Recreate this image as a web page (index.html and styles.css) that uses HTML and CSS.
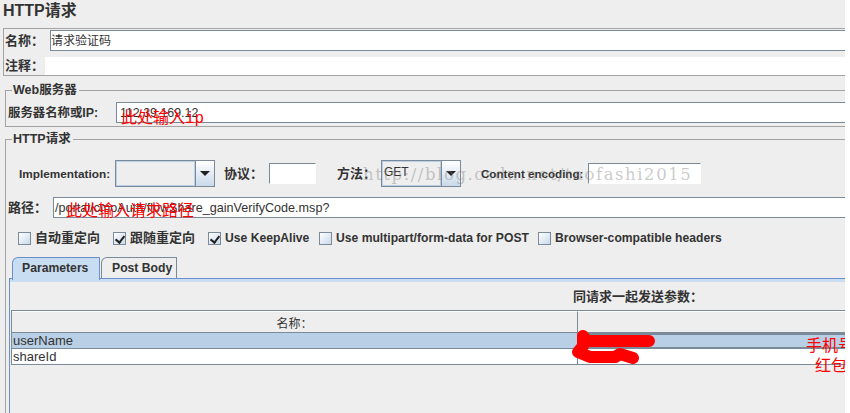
FILE: index.html
```html
<!DOCTYPE html>
<html lang="zh">
<head>
<meta charset="utf-8">
<title>HTTP请求</title>
<link rel="stylesheet" href="styles.css">
</head>
<body>
<div class="app">
  <div class="title">HTTP请求</div>
  <div class="namebox">
    <div class="row-name"><span class="lbl">名称：</span><div class="field field-name">请求验证码</div></div>
    <div class="row-note"><span class="lbl">注释：</span><div class="note"></div></div>
  </div>
  <div class="group group-web">
    <div class="legend">Web服务器</div>
    <div class="row-server"><span class="lbl">服务器名称或IP:</span><div class="field field-server">112.39.169.12</div></div>
  </div>
  <div class="group group-http">
    <div class="legend">HTTP请求</div>
    <div class="row-impl">
      <span class="lbl lbl-impl">Implementation:</span>
      <div class="combo combo-impl"><div class="combo-val"></div><div class="combo-btn"><i class="arrow"></i></div></div>
      <span class="lbl lbl-proto">协议：</span>
      <div class="field small small-proto"></div>
      <span class="lbl lbl-method">方法：</span>
      <div class="combo combo-method"><div class="combo-val">GET</div><div class="combo-btn"><i class="arrow"></i></div></div>
      <span class="lbl lbl-enc">Content encoding:</span>
      <div class="field small small-enc"></div>
    </div>
    <div class="row-path"><span class="lbl">路径：</span><div class="field field-path">/portal/cmoAuth/flowShare_gainVerifyCode.msp?</div></div>
    <div class="row-checks">
      <label class="chk chk-1"><i class="box"></i>自动重定向</label>
      <label class="chk chk-2"><i class="box on"></i>跟随重定向</label>
      <label class="chk chk-3"><i class="box on"></i>Use KeepAlive</label>
      <label class="chk chk-4"><i class="box"></i>Use multipart/form-data for POST</label>
      <label class="chk"><i class="box"></i>Browser-compatible headers</label>
    </div>
    <div class="tabs">
      <div class="tab tab-active">Parameters</div>
      <div class="tab">Post Body</div>
    </div>
    <div class="panel">
      <div class="panel-title">同请求一起发送参数：</div>
      <div class="table">
        <div class="cell head">名称：</div><div class="cell head head-r"></div>
        <div class="cell sel">userName</div><div class="cell sel editing"></div>
        <div class="cell plain">shareId</div><div class="cell plain plain-r"></div>
      </div>
    </div>
  </div>

  <div class="watermark">http://blog.csdn.net/taofashi2015</div>
  <div class="note-red red-ip">此处输入ip</div>
  <div class="note-red red-path">此处输入请求路径</div>
  <div class="note-red red-phone">手机号</div>
  <div class="note-red red-bag">红包</div>
  <svg class="scribble" viewBox="0 0 90 40" width="90" height="40">
    <path d="M13 8 L17 13 L79 13 M13 8 L13 18 L8 24 L20 29 L45 29 L50 26 L63 30" fill="none" stroke="#f00" stroke-width="12" stroke-linecap="round" stroke-linejoin="round"/>
  </svg>
</div>
</body>
</html>
```
FILE: styles.css
```css
* { box-sizing: border-box; }
html, body { margin: 0; padding: 0; background: #fff; }
.app {
  position: relative;
  width: 845px;
  height: 413px;
  overflow: hidden;
  background: #eee;
  color: #333;
  font: bold 12px/14px "Liberation Sans", "Noto Sans CJK SC", sans-serif;
}
.title {
  height: 28px;
  padding: 2px 0 0 3px;
  font-size: 16px;
  line-height: 18px;
}
.namebox {
  height: 48px;
  margin-left: 3px;
  border: 1px solid #a3a3a3;
  border-right: 0;
  padding-top: 1px;
}
.row-name { display: flex; align-items: center; height: 21px; padding-left: 1px; }
.row-name .lbl { width: 45px; font-size: 13px; }
.row-note { display: flex; align-items: center; height: 18px; margin-top: 6px; padding-left: 1px; }
.row-note .lbl { width: 40px; font-size: 13px; }
.note { flex: 1; height: 18px; background: #fff; }
.field {
  background: #fff;
  border: 1px solid #7a8a99;
  border-right: 0;
  font-weight: normal;
  font-size: 12px;
  color: #333;
  padding-left: 1px;
  line-height: 20px;
  white-space: nowrap;
}
.field-name { flex: 1; height: 21px; padding-left: 0; }
.group {
  position: relative;
  margin-left: 5px;
  border: 1px solid #a3a3a3;
  border-right: 0;
}
.legend {
  position: absolute;
  left: 6px;
  top: -8px;
  padding: 0 2px 0 1px;
  background: #eee;
  line-height: 15px;
  font-size: 12.5px;
}
.group-web { height: 37px; margin-top: 14px; padding: 11px 0 0 2px; }
.row-server { display: flex; align-items: center; }
.row-server .lbl { width: 108px; white-space: nowrap; font-size: 12.4px; }
.field-server { flex: 1; height: 21px; padding-left: 3px; font-size: 12.4px; }
.group-http { height: 290px; margin-top: 12px; border-bottom: 0; padding-top: 20px; }
.row-impl { display: flex; align-items: center; height: 27px; }
.lbl-impl { margin-left: 13px; width: 96px; white-space: nowrap; font-size: 11.8px; }
.combo { display: flex; height: 27px; border: 1px solid #7a8a99; }
.combo-impl { width: 100px; }
.combo-method { width: 80px; }
.combo-val {
  flex: 1;
  background: #eee;
  border: 1px solid #b8cfe5;
  font-size: 12px;
  line-height: 20px;
  font-weight: normal;
  padding-left: 1px;
}
.combo-btn {
  width: 19px;
  display: flex;
  align-items: center;
  justify-content: center;
  border-left: 1px solid #7a8a99;
  background: linear-gradient(#fff, #c9d9ea);
}
.arrow { width: 0; height: 0; border: 5px solid transparent; border-top-color: #222; border-bottom: 0; }
.lbl-proto { margin-left: 9px; width: 45px; font-size: 13px; white-space: nowrap; }
.small { height: 21px; }
.small-proto { width: 47px; border: 1px solid #7a8a99; border-bottom-color: #fff; border-right-color: #fff; }
.lbl-method { margin-left: 21px; width: 44px; font-size: 13px; white-space: nowrap; }
.lbl-enc { margin-left: 20px; width: 107px; white-space: nowrap; font-size: 11.6px; }
.small-enc { width: 113px; border: 1px solid #7a8a99; border-bottom-color: #fff; border-right-color: #fff; }
.row-path { display: flex; align-items: center; margin-top: 10px; padding-left: 2px; }
.row-path .lbl { width: 45px; font-size: 13px; }
.field-path { flex: 1; height: 21px; font-size: 12.6px; }
.row-checks { display: flex; align-items: center; height: 14px; margin-top: 13px; padding-left: 12px; }
.chk { display: flex; align-items: center; font-size: 12.15px; white-space: nowrap; }
.chk-1 { width: 95px; font-size: 13px; }
.chk-2 { width: 95px; font-size: 13px; }
.chk-3 { width: 111px; }
.chk-4 { width: 219px; }
.box {
  position: relative;
  width: 13px;
  height: 13px;
  margin-right: 4px;
  border: 1px solid #7a8a99;
  background: linear-gradient(135deg, #fff, #c9d9ea);
}
.box.on::after {
  content: "";
  position: absolute;
  left: 3px;
  top: 1px;
  width: 4px;
  height: 7px;
  border: solid #222;
  border-width: 0 2px 2px 0;
  transform: rotate(38deg);
}
.tabs { display: flex; height: 21px; margin-top: 12px; margin-left: 6px; font-size: 12.2px; }
.tab {
  height: 21px;
  padding: 3px 0 0 10px;
  width: 76px;
  margin-left: 1px;
  border: 1px solid #7a8a99;
  border-bottom: 0;
  border-top-left-radius: 6px 6px;
  background: #eee;
}
.tab-active {
  width: 88px;
  margin-left: 0;
  padding-left: 9px;
  background: #c8ddf2;
  border-color: #6a8fc9;
  height: 23px;
  position: relative;
  z-index: 1;
}
.panel {
  margin-left: 3px;
  height: 140px;
  border: 1px solid #6a8fc9;
  border-right: 0;
  padding: 0 0 0 1px;
  position: relative;
}
.panel::before {
  content: "";
  display: block;
  height: 3px;
  margin-left: -1px;
  background: #c8ddf2;
}
.panel-title { height: 28px; padding: 8px 0 0 562px; font-size: 13px; white-space: nowrap; }
.table {
  display: grid;
  grid-template-columns: 565px 1fr;
  grid-template-rows: 22px 16px 16px;
  border-top: 1px solid #7a8a99;
  border-left: 1px solid #7a8a99;
}
.cell {
  border-bottom: 1px solid #7a8a99;
  font-weight: normal;
  font-size: 13px;
  line-height: 15px;
  padding-left: 1px;
  white-space: nowrap;
}
.head { text-align: center; padding: 5px 0 0; border-top: 1px solid #fff; font-size: 12px; }
.head-r { border-left: 1px solid #7a8a99; }
.sel { background: #b8cfe5; color: #333; }
.editing { border-top: 2px solid #7a8a99; border-bottom-width: 2px; border-left: 1px solid #7a8a99; }
.plain { background: #fff; }
.plain-r { border-left: 1px solid #7a8a99; }
.watermark {
  position: absolute;
  left: 363px;
  top: 165px;
  font: normal 16.5px/20px "DejaVu Serif", serif;
  letter-spacing: 1.55px;
  color: rgba(120,120,120,.4);
  white-space: nowrap;
}
.note-red {
  position: absolute;
  color: #f00;
  font: normal 16px/18px "Liberation Mono", "Noto Sans CJK SC", sans-serif;
  white-space: nowrap;
}
.red-ip { left: 121px; top: 110px; }
.red-path { left: 66px; top: 203px; }
.red-phone { left: 806px; top: 338px; }
.red-bag { left: 815px; top: 358px; }
.scribble { position: absolute; left: 570px; top: 328px; }
```
